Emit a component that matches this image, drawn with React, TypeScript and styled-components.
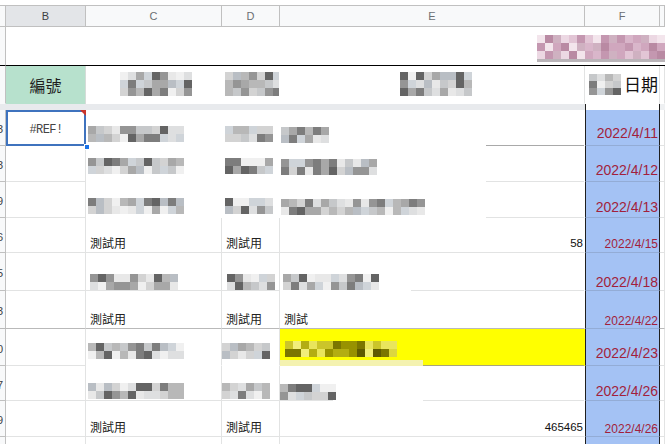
import React from "react";
import styled, { createGlobalStyle, css } from "styled-components";

const GlobalStyle = createGlobalStyle`
  html, body {
    margin: 0;
    padding: 0;
    background: #ffffff;
  }
  body {
    font-family: "Liberation Sans", Arial, sans-serif;
  }
`;

// rowhead (mostly scrolled off), B, C, D, E, F, G
const TRACKS = "40px 80px 136px 58px 305px 75px 5px";
const GRID_LINE = "#e2e3e3";
const HEAD_LINE = "#c0c0c0";
const CJK = `"Noto Sans CJK TC", "Noto Sans CJK SC", sans-serif`;

type Tone = "gray" | "pink" | "olive";

const PALETTES: Record<Tone, string[]> = {
  gray: ["#646464", "#7d7d7d", "#959595", "#a8a8a8", "#b8b8b8", "#c6c8ca", "#d3d3d3", "#dedfe0", "#e8e8e8", "#f0f0f0", "#b9bec4", "#cfd4d9"],
  pink: ["#c497b0", "#d0a7be", "#d9b6ca", "#e2c5d5", "#ecd8e3", "#b98aa3", "#cfb1c1", "#f3e5ec"],
  olive: ["#5e5a00", "#7b7600", "#989200", "#b3ad12", "#cbc52a", "#dcd740", "#e9e55c", "#f1ee7a"],
};

const Viewport = styled.div`
  width: 665px;
  height: 444px;
  overflow: hidden;
`;

const Sheet = styled.div`
  width: 699px;
  margin-left: -34px;
  padding-top: 5px;
`;

const Row = styled.div<{ $h: number }>`
  display: grid;
  grid-template-columns: ${TRACKS};
  height: ${(p) => p.$h}px;
`;

const ColHead = styled.div<{ $active?: boolean }>`
  box-sizing: border-box;
  display: flex;
  align-items: center;
  justify-content: center;
  background: ${(p) => (p.$active ? "#e3e5e8" : "#f8f9fa")};
  border-top: 1px solid ${HEAD_LINE};
  border-right: 1px solid ${HEAD_LINE};
  border-bottom: 1px solid ${HEAD_LINE};
  font-size: 11px;
  color: ${(p) => (p.$active ? "#3c4043" : "#6b6f73")};
`;

const RowHead = styled.div<{ $line?: string }>`
  box-sizing: border-box;
  display: flex;
  align-items: center;
  justify-content: flex-end;
  padding: 3px 2px 0 0;
  background: #f8f9fa;
  border-right: 1px solid ${HEAD_LINE};
  border-bottom: 1px solid ${(p) => p.$line ?? HEAD_LINE};
  font-size: 11px;
  color: #3c4043;
`;

const TitleCell = styled.div`
  grid-column: 2 / -1;
  box-sizing: border-box;
  display: flex;
  justify-content: flex-end;
  align-items: flex-end;
  overflow: hidden;
  border-bottom: 1px solid #000000;
`;

const TitleHead = styled(RowHead)`
  border-bottom-color: #000000;
`;

const Cell = styled.div<{ $right?: string; $bottom?: string; $bg?: string; $justify?: string }>`
  box-sizing: border-box;
  display: flex;
  align-items: flex-end;
  justify-content: ${(p) => p.$justify ?? "flex-start"};
  min-width: 0;
  overflow: hidden;
  white-space: nowrap;
  background-color: ${(p) => p.$bg ?? "#ffffff"};
  border-right: 1px solid ${(p) => p.$right ?? GRID_LINE};
  border-bottom: 1px solid ${(p) => p.$bottom ?? GRID_LINE};
`;

const ECell = styled(Cell)<{ $gap?: [number, number]; $line?: string }>`
  ${(p) =>
    p.$gap &&
    css`
      border-bottom: none;
      background-image: linear-gradient(
        to right,
        ${p.$line ?? GRID_LINE} 0 ${p.$gap[0]}px,
        transparent ${p.$gap[0]}px ${p.$gap[1]}px,
        ${p.$line ?? GRID_LINE} ${p.$gap[1]}px
      );
      background-size: 100% 1px;
      background-position: left bottom;
      background-repeat: no-repeat;
    `}
`;

const NameCell = styled.div`
  box-sizing: border-box;
  display: flex;
  align-items: center;
  justify-content: center;
  background: #b7e1cd;
  border-right: 1px solid #d5dcd8;
  font-family: ${CJK};
  font-size: 16px;
  color: #1f1f1f;
`;

const HeadDateCell = styled.div`
  box-sizing: border-box;
  display: flex;
  align-items: flex-end;
  justify-content: flex-end;
  gap: 3px;
  padding: 0 1px 0 0;
  border-right: 1px solid ${GRID_LINE};
`;

const HeadDateText = styled.span`
  font-family: ${CJK};
  font-size: 17px;
  line-height: 20px;
  color: #111111;
  padding-bottom: 10px;
`;

const FreezeBand = styled.div`
  grid-column: 1 / 6;
  background: #e8eaed;
`;

const FreezeGap = styled.div`
  border-left: 1px solid #1f1f1f;
  border-right: 1px solid #1f1f1f;
  background: #ffffff;
`;

const FreezeEnd = styled.div`
  background: #eef0f2;
`;

const DateCell = styled.div`
  box-sizing: border-box;
  display: flex;
  align-items: flex-end;
  justify-content: flex-end;
  padding-right: 1px;
  background: #a4c2f4;
  border-left: 1px solid #1f1f1f;
  border-right: 1px solid #1f1f1f;
  border-bottom: 1px solid #93acd6;
`;

const DateText = styled.span<{ $big?: boolean; $pb: number }>`
  font-size: ${(p) => (p.$big ? 14 : 12)}px;
  line-height: ${(p) => (p.$big ? 16 : 14)}px;
  padding-bottom: ${(p) => p.$pb}px;
  color: #a21f3c;
`;

const SelectedCell = styled.div`
  position: relative;
  z-index: 1;
  box-sizing: border-box;
  display: flex;
  align-items: center;
  justify-content: center;
  padding-top: 4px;
  background: #ffffff;
  box-shadow: inset 0 0 0 2px #3f73be;
`;

const RefText = styled.span`
  font-family: "Liberation Mono", "DejaVu Sans Mono", monospace;
  font-size: 12px;
  letter-spacing: -0.6px;
  color: #444444;
`;

const ErrorMark = styled.span`
  position: absolute;
  top: 0;
  right: 0;
  width: 0;
  height: 0;
  border-top: 6px solid #c9352b;
  border-left: 6px solid transparent;
`;

const FillHandle = styled.span`
  position: absolute;
  right: -4px;
  bottom: -4px;
  width: 6px;
  height: 6px;
  box-sizing: border-box;
  background: #1a73e8;
  border: 1px solid #ffffff;
`;

const CjkText = styled.span`
  font-family: ${CJK};
  font-size: 12px;
  line-height: 14px;
  color: #222222;
  padding: 0 0 2px 4px;
`;

const NumText = styled.span`
  font-size: 11.5px;
  line-height: 14px;
  color: #111111;
  padding: 0 1px 2px 0;
`;

const BlurGrid = styled.div<{ $cols: number; $cw: number; $ch: number; $ml: number; $mb: number }>`
  display: grid;
  grid-template-columns: repeat(${(p) => p.$cols}, ${(p) => p.$cw}px);
  grid-auto-rows: ${(p) => p.$ch}px;
  margin: 0 0 ${(p) => p.$mb}px ${(p) => p.$ml}px;
  flex-shrink: 0;
  filter: blur(0.5px);
`;

const Redacted = styled.div`
  display: flex;
  flex-direction: column;
  align-items: flex-start;
`;

const PaleStrip = styled.div<{ $w: number; $h: number; $c: string }>`
  width: ${(p) => p.$w}px;
  height: ${(p) => p.$h}px;
  background: ${(p) => p.$c};
  filter: blur(0.6px);
`;

type BlurProps = {
  cols: number;
  rows?: number;
  cw?: number;
  ch?: number;
  tone?: Tone;
  seed: number;
  ml?: number;
  mb?: number;
};

function Blur({ cols, rows = 2, cw = 8, ch = 8, tone = "gray", seed, ml = 0, mb = 0 }: BlurProps) {
  const pal = PALETTES[tone];
  const cells = [];
  for (let i = 0; i < cols * rows; i++) {
    const r = Math.abs(Math.sin((i + 1) * 12.9898 + seed * 78.233) * 43758.5453) % 1;
    cells.push(<span key={i} style={{ background: pal[Math.floor(r * pal.length)] }} />);
  }
  return (
    <BlurGrid $cols={cols} $cw={cw} $ch={ch} $ml={ml} $mb={mb}>
      {cells}
    </BlurGrid>
  );
}

type Blot = { kind: "blur"; cols: number; ml: number; mb: number; seed: number };
type Words = { kind: "cjk" | "num"; text: string };
type Content = Blot | Words;

const blot = (cols: number, ml: number, mb: number, seed: number): Blot => ({ kind: "blur", cols, ml, mb, seed });
const cjk = (text: string): Words => ({ kind: "cjk", text });
const num = (text: string): Words => ({ kind: "num", text });

type DataRow = {
  h: number;
  no: string;
  c: Content;
  d: Content;
  e?: Content;
  date: string;
  big?: boolean;
  pb: number;
  clean?: boolean;
  gap?: [number, number];
  eLine?: string;
  line?: string;
  yellow?: boolean;
  selected?: boolean;
};

const rows: DataRow[] = [
  { h: 36, no: "143", selected: true, c: blot(12, 2, 3, 1), d: blot(6, 3, 3, 2), e: blot(6, 1, 3, 3), date: "2022/4/11", big: true, pb: 4, clean: true, gap: [0, 206], eLine: "#a9a9a9" },
  { h: 36, no: "153", c: blot(12, 2, 7, 4), d: blot(6, 3, 7, 5), e: blot(12, 1, 7, 6), date: "2022/4/12", big: true, pb: 3, clean: true, gap: [0, 206] },
  { h: 36, no: "159", c: blot(12, 2, 3, 7), d: blot(6, 3, 3, 8), e: blot(18, 1, 3, 9), date: "2022/4/13", big: true, pb: 2, clean: true, gap: [0, 206] },
  { h: 35, no: "166", c: cjk("測試用"), d: cjk("測試用"), e: num("58"), date: "2022/4/15", pb: 1 },
  { h: 38, no: "175", c: blot(11, 4, 0, 10), d: blot(6, 5, 0, 11), e: blot(12, 3, 1, 12), date: "2022/4/18", big: true, pb: 0, gap: [0, 131] },
  { h: 38, no: "183", c: cjk("測試用"), d: cjk("測試用"), e: cjk("測試"), date: "2022/4/22", pb: 0, line: "#b9b9b9" },
  { h: 37, no: "190", c: blot(12, 2, 6, 13), d: blot(6, 0, 6, 14), yellow: true, date: "2022/4/23", big: true, pb: 4 },
  { h: 35, no: "197", c: blot(12, 2, 1, 15), d: blot(6, 0, 1, 16), e: blot(7, 0, 1, 17), date: "2022/4/26", big: true, pb: 1, gap: [53, 143] },
  { h: 36, no: "199", c: cjk("測試用"), d: cjk("測試用"), e: num("465465"), date: "2022/4/26", pb: 0 },
];

function renderContent(c?: Content) {
  if (!c) return null;
  if (c.kind === "blur") return <Blur cols={c.cols} ml={c.ml} mb={c.mb} seed={c.seed} />;
  if (c.kind === "cjk") return <CjkText>{c.text}</CjkText>;
  return <NumText>{c.text}</NumText>;
}

const COLUMN_LABELS = ["", "B", "C", "D", "E", "F", ""];

export default function App() {
  return (
    <Viewport>
      <GlobalStyle />
      <Sheet>
        <Row $h={22}>
          {COLUMN_LABELS.map((l, i) => (
            <ColHead key={i} $active={l === "B"}>
              {l}
            </ColHead>
          ))}
        </Row>

        <Row $h={39}>
          <TitleHead />
          <TitleCell>
            <Redacted>
              <Blur cols={16} rows={3} tone="pink" seed={31} />
              <PaleStrip $w={128} $h={3} $c="#b9b4b8" />
              <PaleStrip $w={128} $h={3} $c="#ffffff" />
            </Redacted>
          </TitleCell>
        </Row>

        <Row $h={38}>
          <RowHead $line="transparent" />
          <NameCell>編號</NameCell>
          <Cell $right="transparent" $bottom="transparent">
            <Blur cols={9} rows={3} seed={41} ml={34} mb={7} />
          </Cell>
          <Cell $right="transparent" $bottom="transparent">
            <Blur cols={7} rows={3} seed={42} ml={3} mb={7} />
          </Cell>
          <Cell $bottom="transparent">
            <Blur cols={9} rows={3} seed={43} ml={120} mb={7} />
          </Cell>
          <HeadDateCell>
            <Blur cols={4} rows={3} ch={7} seed={44} mb={9} />
            <HeadDateText>日期</HeadDateText>
          </HeadDateCell>
          <Cell $bottom="transparent" />
        </Row>

        <Row $h={6}>
          <FreezeBand />
          <FreezeGap />
          <FreezeEnd />
        </Row>

        {rows.map((r) => {
          const hidden = r.clean ? "transparent" : undefined;
          const cdBottom = r.yellow ? "transparent" : r.line ?? hidden;
          return (
            <Row $h={r.h} key={r.no}>
              <RowHead $line={r.line}>{r.no}</RowHead>
              {r.selected ? (
                <SelectedCell>
                  <RefText>#REF!</RefText>
                  <ErrorMark />
                  <FillHandle />
                </SelectedCell>
              ) : (
                <Cell $bottom={r.line} />
              )}
              <Cell $right={hidden} $bottom={cdBottom}>
                {renderContent(r.c)}
              </Cell>
              <Cell $right={hidden} $bottom={cdBottom}>
                {renderContent(r.d)}
              </Cell>
              {r.yellow ? (
                <ECell $right="transparent" $bg="#ffff00" $gap={[0, 143]} $line="#a8a57a">
                  <Redacted>
                    <Blur cols={14} tone="olive" seed={51} ml={5} mb={3} />
                    <PaleStrip $w={143} $h={6} $c="#f4f2b0" />
                  </Redacted>
                </ECell>
              ) : (
                <ECell
                  $right="transparent"
                  $bottom={r.line}
                  $gap={r.gap}
                  $line={r.eLine}
                  $justify={r.e?.kind === "num" ? "flex-end" : "flex-start"}
                >
                  {renderContent(r.e)}
                </ECell>
              )}
              <DateCell>
                <DateText $big={r.big} $pb={r.pb}>
                  {r.date}
                </DateText>
              </DateCell>
              <Cell $bottom={r.line} />
            </Row>
          );
        })}

        <Row $h={10}>
          <RowHead />
          <Cell />
          <Cell />
          <Cell />
          <ECell $right="transparent" />
          <DateCell />
          <Cell />
        </Row>
      </Sheet>
    </Viewport>
  );
}
